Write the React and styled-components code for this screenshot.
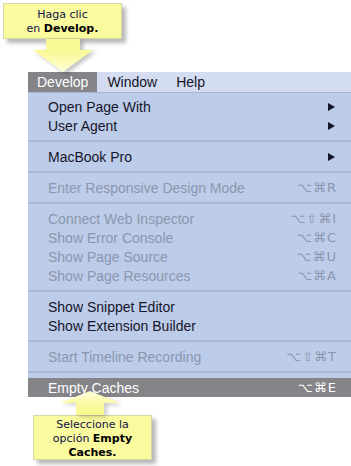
import styled, { createGlobalStyle } from 'styled-components';

const GlobalStyle = createGlobalStyle`
body {
    margin: 0;
    background: #ffffff;
    font-family: "Liberation Sans", Arial, sans-serif;
}
`;

const groups = [
    [
        { label: 'Open Page With', submenu: true },
        { label: 'User Agent', submenu: true },
    ],
    [{ label: 'MacBook Pro', submenu: true }],
    [{ label: 'Enter Responsive Design Mode', keys: '⌥⌘R', disabled: true }],
    [
        { label: 'Connect Web Inspector', keys: '⌥⇧⌘I', disabled: true },
        { label: 'Show Error Console', keys: '⌥⌘C', disabled: true },
        { label: 'Show Page Source', keys: '⌥⌘U', disabled: true },
        { label: 'Show Page Resources', keys: '⌥⌘A', disabled: true },
    ],
    [
        { label: 'Show Snippet Editor' },
        { label: 'Show Extension Builder' },
    ],
    [{ label: 'Start Timeline Recording', keys: '⌥⇧⌘T', disabled: true }],
];

const UpArrow = ({ width, shaft, head, tall }) => (
    <svg width={width} height={tall} viewBox={`0 0 ${width} ${tall}`}>
        <defs>
            <linearGradient id="upFill" x1="0" y1="0" x2="0" y2="1">
                <stop offset="0" stopColor="#fdfdd8" />
                <stop offset="0.6" stopColor="#fafa9e" />
                <stop offset="1" stopColor="#f8f890" />
            </linearGradient>
        </defs>
        <polygon
            points={`${width / 2},0 ${width},${head} ${(width + shaft) / 2},${head} ${(width + shaft) / 2},${tall} ${(width - shaft) / 2},${tall} ${(width - shaft) / 2},${head} 0,${head}`}
            fill="url(#upFill)"
        />
    </svg>
);

const DownArrow = ({ width, shaft, head, tall }) => (
    <svg width={width} height={tall} viewBox={`0 0 ${width} ${tall}`}>
        <defs>
            <linearGradient id="downFill" x1="0" y1="0" x2="0" y2="1">
                <stop offset="0" stopColor="#f8f890" />
                <stop offset="0.45" stopColor="#fafa9e" />
                <stop offset="1" stopColor="#fdfdd8" />
            </linearGradient>
        </defs>
        <polygon
            points={`${(width - shaft) / 2},0 ${(width + shaft) / 2},0 ${(width + shaft) / 2},${tall - head} ${width},${tall - head} ${width / 2},${tall} 0,${tall - head} ${(width - shaft) / 2},${tall - head}`}
            fill="url(#downFill)"
        />
    </svg>
);

const SubmenuArrow = () => (
    <svg width="7" height="8" viewBox="0 0 7 8">
        <polygon points="0,0 7,4 0,8" fill="#14142a" />
    </svg>
);

const App = () => {
    return (
        <Page>
            <GlobalStyle />
            <Screen>
                <MenuBar>
                    <BarItem $active>
                        Develop
                        <TopCallout>
                            <Note>
                                Haga clic
                                <br />
                                en <b>Develop.</b>
                            </Note>
                            <ArrowWrap>
                                <DownArrow width={60} shaft={34} head={22} tall={33} />
                            </ArrowWrap>
                        </TopCallout>
                    </BarItem>
                    <BarItem>Window</BarItem>
                    <BarItem>Help</BarItem>
                </MenuBar>
                <Dropdown>
                    {groups.map((group, gi) => (
                        <div key={gi}>
                            {group.map((item) => (
                                <Item key={item.label} $disabled={item.disabled}>
                                    <Label>{item.label}</Label>
                                    {item.submenu && <SubmenuArrow />}
                                    {item.keys && <Keys>{item.keys}</Keys>}
                                </Item>
                            ))}
                            <Separator />
                        </div>
                    ))}
                    <Item $selected>
                        <Label>Empty Caches</Label>
                        <Keys>⌥⌘E</Keys>
                        <BottomCallout>
                            <BottomArrowWrap>
                                <UpArrow width={60} shaft={28} head={12} tall={24} />
                            </BottomArrowWrap>
                            <Note $tall>
                                Seleccione la
                                <br />
                                opción <b>Empty</b>
                                <br />
                                <b>Caches.</b>
                            </Note>
                        </BottomCallout>
                    </Item>
                </Dropdown>
            </Screen>
        </Page>
    );
};

const Page = styled.div`
position: relative;
width: 351px;
height: 466px;
padding-top: 72px;
box-sizing: border-box;
overflow: hidden;
`;

const Screen = styled.div`
margin-left: 28px;
`;

const MenuBar = styled.div`
display: flex;
height: 20px;
background: #d3dcf0;
border-bottom: 1px solid #a5b5d3;
`;

const BarItem = styled.div`
position: relative;
padding: 0 9px 0 ${(p) => (p.$active ? '9px' : '10px')};
line-height: 20px;
font-size: 14px;
color: ${(p) => (p.$active ? '#ffffff' : '#15152a')};
background: ${(p) => (p.$active ? '#858489' : 'transparent')};
`;

const Dropdown = styled.div`
background: #bdcce9;
padding-top: 4px;
`;

const Item = styled.div`
position: relative;
display: flex;
align-items: center;
justify-content: space-between;
height: 19px;
padding: 0 14px 0 20px;
font-size: 14px;
color: ${(p) => (p.$selected ? '#ffffff' : p.$disabled ? '#8b96ad' : '#15152a')};
background: ${(p) => (p.$selected ? '#858489' : 'transparent')};

svg {
    margin-right: 2px;
}
`;

const Label = styled.span`
position: relative;
z-index: 3;
`;

const Keys = styled.span`
font-family: "DejaVu Sans", "Liberation Sans", sans-serif;
font-size: 13px;
letter-spacing: 1px;
`;

const Separator = styled.div`
height: 2px;
margin: 5px 0;
background: #a9bad9;
`;

const TopCallout = styled.div`
position: absolute;
bottom: 100%;
left: -25px;
display: flex;
flex-direction: column;
align-items: center;
`;

const BottomCallout = styled.div`
position: absolute;
top: 13px;
left: 5px;
display: flex;
flex-direction: column;
align-items: flex-start;
z-index: 2;
`;

const ArrowWrap = styled.div`
display: flex;
filter: drop-shadow(3px 2px 2px rgba(0, 0, 0, 0.25));
`;

const BottomArrowWrap = styled.div`
display: flex;
margin-left: 27px;
filter: drop-shadow(3px 2px 2px rgba(0, 0, 0, 0.2));
`;

const Note = styled.div`
box-sizing: border-box;
width: 119px;
height: ${(p) => (p.$tall ? '45px' : '36px')};
padding-top: ${(p) => (p.$tall ? '2px' : '4px')};
background: #fafa9e;
border: 1px solid #d6d6a6;
box-shadow: 4px 4px 4px rgba(0, 0, 0, 0.28);
font-family: "DejaVu Sans", Verdana, sans-serif;
font-size: 11px;
line-height: 14px;
text-align: center;
color: #10104a;

b {
    color: #000000;
}
`;

export default App;
